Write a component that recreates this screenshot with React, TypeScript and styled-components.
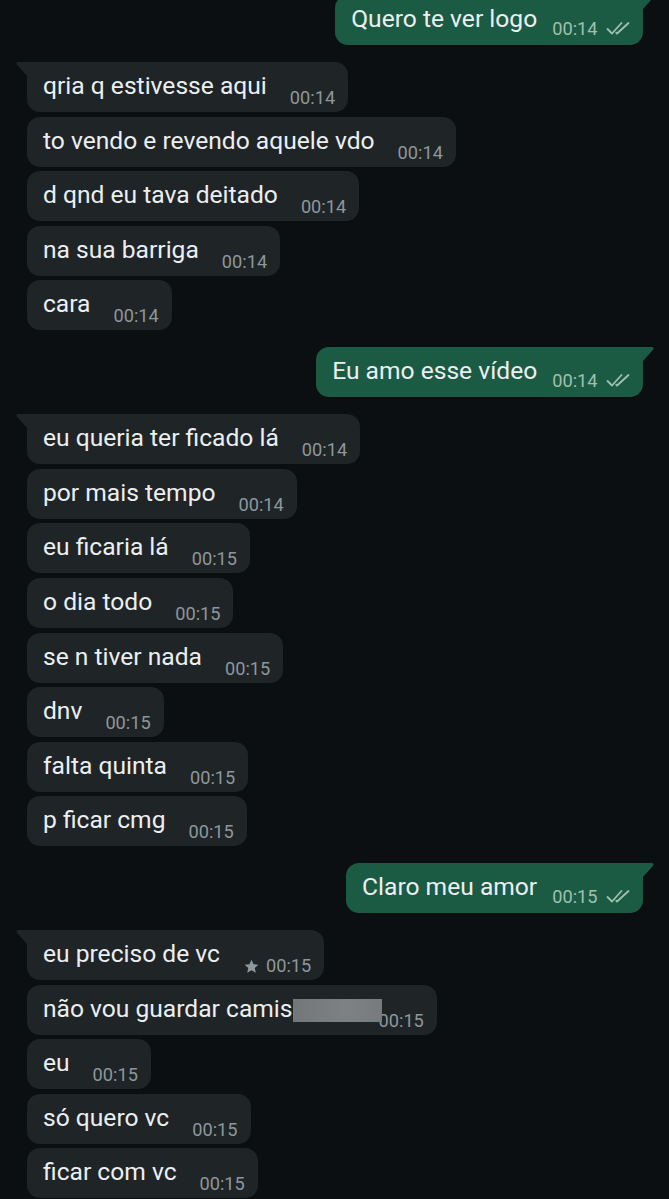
import React from "react";
import styled, { createGlobalStyle, css } from "styled-components";

const GlobalStyle = createGlobalStyle`
  html, body { margin: 0; padding: 0; background: #0b0f12; }
  body { font-family: Roboto, "Noto Sans", "Liberation Sans", sans-serif; -webkit-font-smoothing: antialiased; }
  #root { overflow: hidden; height: 1199px; }
`;

type Side = "in" | "out";

const Chat = styled.div`
  display: flex;
  flex-direction: column;
  gap: 17px;
  padding: 0 26px 0 27px;
  margin-top: -5px;
`;

const Group = styled.div<{ $side: Side }>`
  display: flex;
  flex-direction: column;
  gap: 4.57px;
  align-items: ${(p) => (p.$side === "in" ? "flex-start" : "flex-end")};
`;

const Bubble = styled.div<{ $side: Side; $tail: boolean }>`
  position: relative;
  box-sizing: border-box;
  height: 50px;
  display: flex;
  align-items: flex-start;
  border-radius: 13px;
  color: #eceff1;
  ${(p) =>
    p.$side === "in"
      ? css`
          background: #1f2427;
          padding: 0 13px 0 16px;
        `
      : css`
          background: #1b5b44;
          padding: 0 13.5px 0 16px;
        `}
  ${(p) =>
    p.$tail &&
    (p.$side === "in"
      ? css`border-top-left-radius: 0;`
      : css`border-top-right-radius: 0;`)}
`;

const Tail = styled.svg<{ $side: Side }>`
  position: absolute;
  top: 0;
  width: 11px;
  height: 14px;
  ${(p) => (p.$side === "in" ? css`left: -11px;` : css`right: -11px;`)}
`;

const Text = styled.span`
  font-size: 24.6px;
  line-height: 28px;
  padding-top: 10px;
  white-space: nowrap;
`;

const Meta = styled.span<{ $side: Side }>`
  align-self: flex-end;
  display: flex;
  align-items: center;
  white-space: nowrap;
  font-size: 18.2px;
  line-height: 20px;
  ${(p) =>
    p.$side === "in"
      ? css`
          color: #8e979b;
          margin: 0 0 4px 23px;
        `
      : css`
          color: #9fc0b0;
          margin: 0 0 6.5px 15px;
        `}
`;

const Star = styled.svg`
  width: 17px;
  height: 17px;
  margin-right: 6px;
`;

const Checks = styled.svg`
  width: 24px;
  height: 15px;
  margin-left: 8px;
`;

const Redacted = styled.span`
  position: relative;
  z-index: 1;
  display: inline-block;
  width: 89px;
  height: 23px;
  margin-right: -26px;
  vertical-align: -5px;
  background: linear-gradient(90deg, #74777a, #7e8184 60%, #787b7e);
`;

type Msg = { text: string; time: string; star?: boolean; redact?: boolean };
type G = { side: Side; msgs: Msg[] };

const groups: G[] = [
  { side: "out", msgs: [{ text: "Quero te ver logo", time: "00:14" }] },
  {
    side: "in",
    msgs: [
      { text: "qria q estivesse aqui", time: "00:14" },
      { text: "to vendo e revendo aquele vdo", time: "00:14" },
      { text: "d qnd eu tava deitado", time: "00:14" },
      { text: "na sua barriga", time: "00:14" },
      { text: "cara", time: "00:14" },
    ],
  },
  { side: "out", msgs: [{ text: "Eu amo esse vídeo", time: "00:14" }] },
  {
    side: "in",
    msgs: [
      { text: "eu queria ter ficado lá", time: "00:14" },
      { text: "por mais tempo", time: "00:14" },
      { text: "eu ficaria lá", time: "00:15" },
      { text: "o dia todo", time: "00:15" },
      { text: "se n tiver nada", time: "00:15" },
      { text: "dnv", time: "00:15" },
      { text: "falta quinta", time: "00:15" },
      { text: "p ficar cmg", time: "00:15" },
    ],
  },
  { side: "out", msgs: [{ text: "Claro meu amor", time: "00:15" }] },
  {
    side: "in",
    msgs: [
      { text: "eu preciso de vc", time: "00:15", star: true },
      { text: "não vou guardar camis", time: "00:15", redact: true },
      { text: "eu", time: "00:15" },
      { text: "só quero vc", time: "00:15" },
      { text: "ficar com vc", time: "00:15" },
    ],
  },
];

const TailShape = ({ side }: { side: Side }) => (
  <Tail $side={side} viewBox="0 0 11 14">
    {side === "in" ? (
      <path d="M11 0 H2.2 C0.6 0 -0.2 1.6 0.9 2.8 L11 14 Z" fill="#1f2427" />
    ) : (
      <path d="M0 0 H8.8 C10.4 0 11.2 1.6 10.1 2.8 L0 14 Z" fill="#1b5b44" />
    )}
  </Tail>
);

const StarIcon = () => (
  <Star viewBox="0 0 24 24">
    <path
      d="M12 2.5l2.9 6.2 6.8.7-5.1 4.6 1.5 6.7L12 17.3l-6.1 3.4 1.5-6.7-5.1-4.6 6.8-.7z"
      fill="currentColor"
    />
  </Star>
);

const CheckIcon = () => (
  <Checks viewBox="0 0 24 15" fill="none" stroke="currentColor" strokeWidth="1.8" strokeLinecap="round" strokeLinejoin="round">
    <path d="M1.5 8 L6 12.5 L15.5 2" />
    <path d="M10.2 11.6 L11.1 12.5 L22.5 2" />
  </Checks>
);

export default function App() {
  return (
    <>
      <GlobalStyle />
      <Chat>
        {groups.map((g, gi) => (
          <Group key={gi} $side={g.side}>
            {g.msgs.map((m, mi) => (
              <Bubble key={mi} $side={g.side} $tail={mi === 0}>
                {mi === 0 && <TailShape side={g.side} />}
                <Text>
                  {m.text}
                  {m.redact && <Redacted />}
                </Text>
                <Meta $side={g.side}>
                  {m.star && <StarIcon />}
                  {m.time}
                  {g.side === "out" && <CheckIcon />}
                </Meta>
              </Bubble>
            ))}
          </Group>
        ))}
      </Chat>
    </>
  );
}
